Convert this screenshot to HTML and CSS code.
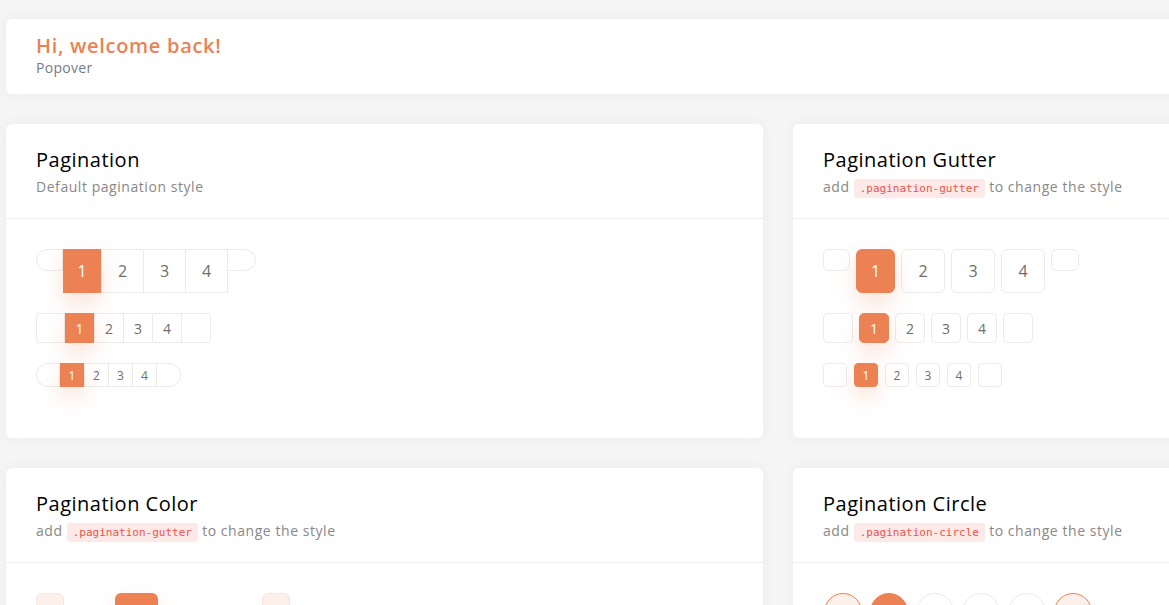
FILE: index.html
```html
<!DOCTYPE html>
<html lang="en">
<head>
<meta charset="utf-8">
<title>Pagination</title>
<link rel="stylesheet" href="styles.css">
</head>
<body>
<div class="page">
  <div class="card welcome">
    <h1 class="welcome-title">Hi, welcome back!</h1>
    <p class="welcome-sub">Popover</p>
  </div>

  <div class="grid">
    <section class="card">
      <div class="card-header">
        <h2 class="card-title">Pagination</h2>
        <p class="card-sub">Default pagination style</p>
      </div>
      <div class="card-body">
        <ul class="pg joined lg">
          <li class="pi prev"></li><li class="pi one active">1</li><li class="pi">2</li><li class="pi">3</li><li class="pi">4</li><li class="pi next"></li>
        </ul>
        <ul class="pg joined md">
          <li class="pi prev"></li><li class="pi active">1</li><li class="pi">2</li><li class="pi">3</li><li class="pi">4</li><li class="pi next"></li>
        </ul>
        <ul class="pg joined sm">
          <li class="pi prev"></li><li class="pi active">1</li><li class="pi">2</li><li class="pi">3</li><li class="pi">4</li><li class="pi next"></li>
        </ul>
      </div>
    </section>

    <section class="card">
      <div class="card-header">
        <h2 class="card-title">Pagination Gutter</h2>
        <p class="card-sub">add <code class="chip">.pagination-gutter</code> to change the style</p>
      </div>
      <div class="card-body">
        <ul class="pg gutter lg">
          <li class="pi prev"></li><li class="pi one active">1</li><li class="pi">2</li><li class="pi">3</li><li class="pi">4</li><li class="pi next"></li>
        </ul>
        <ul class="pg gutter md">
          <li class="pi prev"></li><li class="pi active">1</li><li class="pi">2</li><li class="pi">3</li><li class="pi">4</li><li class="pi next"></li>
        </ul>
        <ul class="pg gutter sm">
          <li class="pi prev"></li><li class="pi active">1</li><li class="pi">2</li><li class="pi">3</li><li class="pi">4</li><li class="pi next"></li>
        </ul>
      </div>
    </section>

    <section class="card">
      <div class="card-header">
        <h2 class="card-title">Pagination Color</h2>
        <p class="card-sub">add <code class="chip">.pagination-gutter</code> to change the style</p>
      </div>
      <div class="card-body">
        <ul class="pg colored">
          <li class="pi prev"></li><li class="pi one">1</li><li class="pi active">2</li><li class="pi">3</li><li class="pi">4</li><li class="pi next"></li>
        </ul>
      </div>
    </section>

    <section class="card">
      <div class="card-header">
        <h2 class="card-title">Pagination Circle</h2>
        <p class="card-sub">add <code class="chip">.pagination-circle</code> to change the style</p>
      </div>
      <div class="card-body">
        <ul class="pg circle">
          <li class="pi prev"></li><li class="pi active">1</li><li class="pi">2</li><li class="pi">3</li><li class="pi">4</li><li class="pi next"></li>
        </ul>
      </div>
    </section>
  </div>
</div>
</body>
</html>
```

FILE: styles.css
```css
* { box-sizing: border-box; }

html, body {
  margin: 0;
  padding: 0;
  background: #f5f5f5;
  overflow: hidden;
}

body {
  font-family: "Open Sans", "Noto Sans", sans-serif;
  color: #6e6e6e;
}

.page {
  width: 1600px;
  padding: 19px 0 0 6px;
}

.card {
  background: #fff;
  border-radius: 6px;
  box-shadow: 0 0 13px rgba(82, 63, 105, 0.05);
}

.welcome {
  padding: 15px 30px 16px;
  margin-bottom: 30px;
}

.welcome-title {
  margin: 0;
  font-size: 20px;
  line-height: 24px;
  font-weight: 600;
  letter-spacing: 0.7px;
  color: #ec8153;
}

.welcome-sub {
  margin: 0;
  font-size: 14px;
  line-height: 20px;
  color: #737b8b;
  letter-spacing: 0.3px;
}

.grid {
  display: grid;
  grid-template-columns: 757px 757px;
  column-gap: 30px;
  row-gap: 30px;
  align-items: stretch;
}

.card-header {
  padding: 24px 30px 21px;
  border-bottom: 1px solid #eeeeee;
}

.card-title {
  margin: 0;
  font-size: 20px;
  line-height: 24px;
  font-weight: 500;
  color: #000;
  letter-spacing: 0.5px;
}

.card-sub {
  margin: 5px 0 0;
  font-size: 14px;
  line-height: 20px;
  color: #888888;
  letter-spacing: 0.55px;
}

.chip {
  font-family: "DejaVu Sans Mono", "Liberation Mono", monospace;
  font-size: 11px;
  line-height: 1;
  letter-spacing: 0;
  color: #f0534c;
  background: #fde9e7;
  border-radius: 3px;
  padding: 3px 6px;
}

.card-body {
  padding: 30px 30px 31px;
}

/* pagination base */
.pg {
  list-style: none;
  margin: 0 0 20px;
  padding: 0;
  display: flex;
  align-items: flex-start;
}

.pi {
  display: flex;
  align-items: center;
  justify-content: center;
  border: 1px solid #ebebeb;
  background: #fff;
  color: #6e6e6e;
  flex: none;
}

.pi.active {
  background: #ec8153;
  border-color: #ec8153;
  color: #fff;
  box-shadow: 0 10px 20px rgba(236, 129, 83, 0.22);
  position: relative;
  z-index: 1;
}

/* joined style */
.joined .pi + .pi { margin-left: -1px; }
.joined .pi.active + .pi { margin-left: 0; }
.joined .prev + .pi.active { margin-left: 0; }

.joined.lg .pi { width: 43px; height: 44px; font-size: 16px; }
.joined.lg .pi.one { width: 38px; }
.joined.lg .prev { width: 27px; height: 22px; border-radius: 11px 0 0 11px; }
.joined.lg .next { width: 29px; height: 22px; border-radius: 0 11px 11px 0; }

.joined.md .pi { width: 30px; height: 30px; font-size: 14px; }
.joined.md .pi.active { width: 29px; }
.joined.md .prev { width: 29px; border-radius: 4px 0 0 4px; }
.joined.md .next { width: 30px; border-radius: 0 4px 4px 0; }

.joined.sm .pi { width: 25px; height: 24px; font-size: 12px; }
.joined.sm .pi.active { width: 24px; }
.joined.sm .prev { width: 24px; border-radius: 12px 0 0 12px; }
.joined.sm .next { width: 25px; border-radius: 0 12px 12px 0; }

/* gutter style */
.gutter.lg { gap: 6px; }
.gutter.lg .pi { width: 44px; height: 44px; font-size: 16px; border-radius: 6px; }
.gutter.lg .pi.one { width: 39px; }
.gutter.lg .prev { width: 27px; height: 22px; }
.gutter.lg .next { width: 28px; height: 22px; }

.gutter.md { gap: 6px; }
.gutter.md .pi { width: 30px; height: 30px; font-size: 14px; border-radius: 5px; }

.gutter.sm { gap: 7px; }
.gutter.sm .pi { width: 24px; height: 24px; font-size: 12px; border-radius: 4px; }

/* color style */
.colored { gap: 6px; }
.colored .pi { width: 43px; height: 44px; font-size: 16px; border-radius: 6px; border-color: transparent; }
.colored .pi.one { width: 39px; }
.colored .prev,
.colored .next { width: 28px; background: #fdefe9; border-color: #fbe6dd; }

/* circle style */
.circle { gap: 8px; padding-left: 1px; }
.circle .pi { width: 38px; height: 38px; border-radius: 50%; font-size: 14px; }
.circle .prev,
.circle .next { background: #fdefe9; border-color: #ec8153; }
```
